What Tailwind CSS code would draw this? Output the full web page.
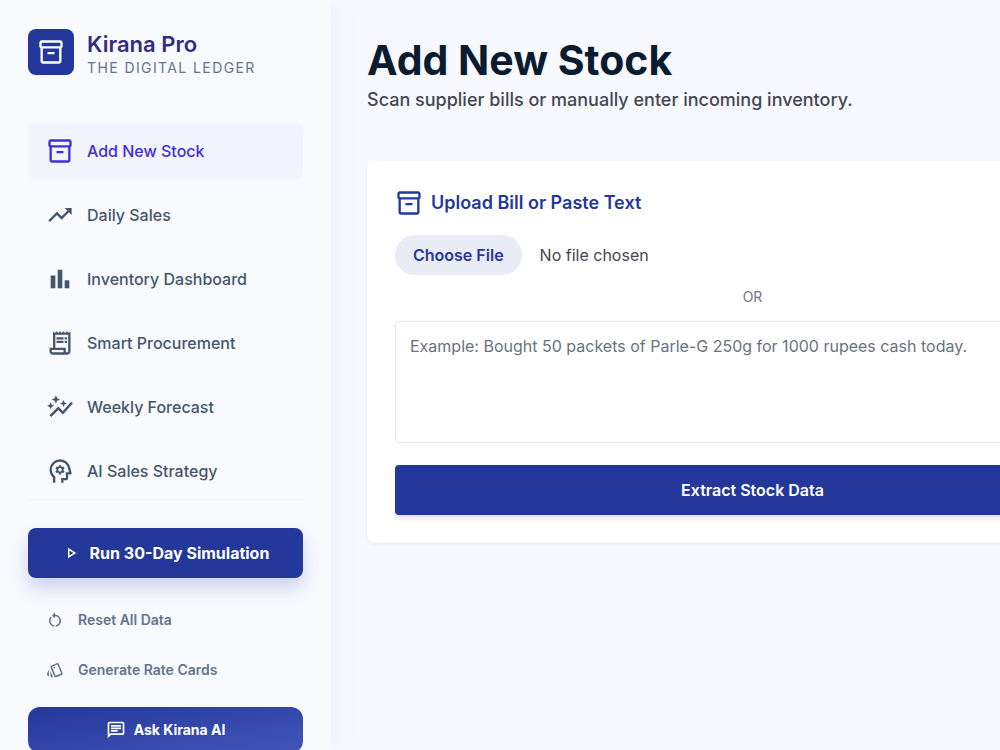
<!DOCTYPE html>
<html lang="en">
  <head>
    <meta charset="UTF-8" />
    <meta name="viewport" content="width=device-width, initial-scale=1.0" />
    <title>Kirana Pro - Add New Stock</title>
    <script src="https://cdn.jsdelivr.net/npm/@tailwindcss/browser@4"></script>
  </head>
  <body class="flex h-screen overflow-hidden bg-[#f8f9ff] font-['Inter','Liberation_Sans',sans-serif] text-[#0b1c30]">
    <!-- shared icons -->
    <svg class="hidden">
      <symbol id="box" viewBox="0 0 24 24">
        <path d="M20 2H4c-1 0-2 .9-2 2v3.01c0 .72.43 1.34 1 1.69V20c0 1.1 1.1 2 2 2h14c.9 0 2-.9 2-2V8.7c.57-.35 1-.97 1-1.69V4c0-1.1-1-2-2-2zm-1 18H5V9h14v11zm1-13H4V4h16v3zM9 12h6v2H9z" />
      </symbol>
    </svg>

    <!-- Sidebar -->
    <aside class="flex w-[331px] shrink-0 flex-col bg-[#f8fafe] px-7 pt-7 shadow-[10px_0_20px_rgba(79,70,229,0.04)]">
      <div class="flex h-12 items-center gap-[13px]">
        <div class="flex size-[46px] items-center justify-center rounded-lg bg-[#24389c] text-white">
          <svg class="size-7" fill="currentColor"><use href="#box" /></svg>
        </div>
        <div class="pt-[3px]">
          <h1 class="text-[22px] leading-7 font-semibold text-indigo-900">Kirana Pro</h1>
          <p class="text-sm leading-5 tracking-widest text-slate-500">THE DIGITAL LEDGER</p>
        </div>
      </div>

      <nav class="mt-[47px] flex flex-col gap-2 text-base font-medium text-slate-600">
        <a href="#" class="flex h-14 items-center gap-[13px] rounded-md bg-[#f2f5ff] px-[18px] text-indigo-700">
          <svg class="size-7" fill="currentColor"><use href="#box" /></svg>
          Add New Stock
        </a>
        <a href="#" class="flex h-14 items-center gap-[13px] rounded-md px-[18px]">
          <svg class="size-7" viewBox="0 0 24 24" fill="currentColor"><path d="m16 6 2.29 2.29-4.88 4.88-4-4L2 16.59 3.41 18l6-6 4 4 6.3-6.29L22 12V6z" /></svg>
          Daily Sales
        </a>
        <a href="#" class="flex h-14 items-center gap-[13px] rounded-md px-[18px]">
          <svg class="size-7" viewBox="0 0 24 24" fill="currentColor"><path d="M4 9h4v11H4zm12 4h4v7h-4zm-6-9h4v16h-4z" /></svg>
          Inventory Dashboard
        </a>
        <a href="#" class="flex h-14 items-center gap-[13px] rounded-md px-[18px]">
          <svg class="size-7" viewBox="0 0 24 24" fill="currentColor"><path d="M19.5 3.5 18 2l-1.5 1.5L15 2l-1.5 1.5L12 2l-1.5 1.5L9 2 7.5 3.5 6 2v14H3v3c0 1.66 1.34 3 3 3h12c1.66 0 3-1.34 3-3V2l-1.5 1.5zM15 20H6c-.55 0-1-.45-1-1v-1h10v2zm4-1c0 .55-.45 1-1 1s-1-.45-1-1v-3H8V5h11v14zM9 7h6v2H9zm7 0h2v2h-2zm-7 3h6v2H9zm7 0h2v2h-2z" /></svg>
          Smart Procurement
        </a>
        <a href="#" class="flex h-14 items-center gap-[13px] rounded-md px-[18px]">
          <svg class="size-7" viewBox="0 0 24 24" fill="currentColor"><path d="M14.06 9.94 12 9l2.06-.94L15 6l.94 2.06L18 9l-2.06.94L15 12l-.94-2.06zM4 14l.94-2.06L7 11l-2.06-.94L4 8l-.94 2.06L1 11l2.06.94L4 14zm4.5-5 1.09-2.41L12 5.5 9.59 4.41 8.5 2 7.41 4.41 5 5.5l2.41 1.09L8.5 9zm-4 11.5 6-6.01 4 4L23 8.93l-1.41-1.41-7.09 7.97-4-4L3 19l1.5 1.5z" /></svg>
          Weekly Forecast
        </a>
        <a href="#" class="flex h-14 items-center gap-[13px] rounded-md px-[18px]">
          <svg class="size-7" viewBox="0 -960 960 960" fill="currentColor"><path fill-rule="evenodd" d="M240-80v-172q-57-52-88.5-121.5T120-520q0-150 105-255t255-105q125 0 221.5 73.5T827-615l52 205q5 19-7 34.5T840-360h-80v120q0 33-23.5 56.5T680-160h-80v80h-80v-160h160v-200h108l-38-155q-23-91-98-148t-172-57q-116 0-198 81t-82 197q0 60 24.5 114t69.5 96l26 24v208h-80ZM440-360h80l6-50q8-3 14.5-7t11.5-9l46 20 40-68-40-30q2-8 2-16t-2-16l40-30-40-68-46 20q-5-5-11.5-9t-14.5-7l-6-50h-80l-6 50q-8 3-14.5 7t-11.5 9l-46-20-40 68 40 30q-2 8-2 16t2 16l-40 30 40 68 46-20q5 5 11.5 9t14.5 7l6 50Zm40-100q-25 0-42.5-17.5T420-520t17.5-42.5T480-580t42.5 17.5T540-520t-17.5 42.5T480-460Z" /></svg>
          AI Sales Strategy
        </a>
      </nav>

      <div class="flex flex-col border-t border-slate-100 pt-7">
        <button type="button" class="flex h-[50px] shrink-0 items-center justify-center gap-2.5 rounded-lg bg-[#24389c] text-base font-bold text-white shadow-[0_10px_18px_rgba(36,56,156,0.2)]">
          <svg class="size-[18px]" viewBox="0 -960 960 960" fill="currentColor"><path d="M320-200v-560l440 280L320-200Zm80-146 210-134-210-134v268Z" /></svg>
          Run 30-Day Simulation
        </button>
        <div class="mt-[17px] flex flex-col text-sm font-semibold text-slate-500">
          <button type="button" class="flex h-[50px] items-center gap-3.5 px-[18px]">
            <svg class="size-[18px]" viewBox="0 0 24 24" fill="currentColor"><path d="M12 5V2L8 6l4 4V7c3.31 0 6 2.69 6 6 0 2.97-2.17 5.43-5 5.91v2.02c3.95-.49 7-3.85 7-7.93 0-4.42-3.58-8-8-8zm-6 8c0-1.65.67-3.15 1.76-4.24L6.34 7.34C4.9 8.79 4 10.79 4 13c0 4.08 3.05 7.44 7 7.93v-2.02c-2.83-.48-5-2.94-5-5.91z" /></svg>
            Reset All Data
          </button>
          <button type="button" class="flex h-[50px] items-center gap-3.5 px-[18px]">
            <svg class="size-[18px]" viewBox="0 0 24 24" fill="currentColor"><path d="m2.53 19.65 1.34.56v-9.03l-2.43 5.86c-.41 1.02.08 2.19 1.09 2.61zm19.5-3.7L17.07 3.98c-.31-.75-1.04-1.21-1.81-1.23-.26 0-.53.04-.79.15L7.1 5.95c-.75.31-1.21 1.03-1.23 1.8-.01.27.04.54.15.8l4.96 11.97c.31.76 1.05 1.22 1.83 1.23.26 0 .52-.05.77-.15l7.36-3.05c1.02-.42 1.51-1.59 1.09-2.6zm-9.2 3.8L7.87 7.79l7.35-3.04h.01l4.95 11.95-7.35 3.05zM5.88 19.75c0 1.1.9 2 2 2h1.45l-3.45-8.34v6.34z" /><circle cx="11" cy="9" r="1" /></svg>
            Generate Rate Cards
          </button>
        </div>
        <button type="button" class="mt-3 flex h-[46px] shrink-0 items-center justify-center gap-2 rounded-xl bg-linear-to-br from-[#24389c] to-[#4355b9] text-sm font-bold text-white">
          <svg class="size-5" viewBox="0 0 24 24" fill="currentColor"><path d="M4 4h16v12H5.17L4 17.17V4m0-2c-1.1 0-1.99.9-1.99 2L2 22l4-4h14c1.1 0 2-.9 2-2V4c0-1.1-.9-2-2-2H4zm2 10h8v2H6v-2zm0-3h12v2H6V9zm0-3h12v2H6V6z" /></svg>
          Ask Kirana AI
        </button>
      </div>
    </aside>

    <!-- Main content -->
    <main class="flex-1 overflow-hidden px-9 pt-9">
      <div class="min-w-[771px]">
        <h2 class="text-[41px] leading-12 font-bold">Add New Stock</h2>
        <p class="mt-0.5 text-lg leading-7 font-medium text-[#454652]">Scan supplier bills or manually enter incoming inventory.</p>

        <section class="mt-[47px] flex flex-col rounded-lg bg-white p-7 shadow-[0_1px_3px_rgba(0,0,0,0.07)]">
          <label for="billFile" class="flex items-center gap-2 text-lg leading-7 font-semibold text-[#24389c]">
            <svg class="size-7" fill="currentColor"><use href="#box" /></svg>
            Upload Bill or Paste Text
          </label>
          <input
            type="file"
            id="billFile"
            class="mt-[18px] text-base leading-6 text-[#454652] file:mr-[18px] file:h-10 file:rounded-full file:bg-[#e9ebf5] file:px-[18px] file:text-base file:font-semibold file:text-[#24389c]"
          />
          <label for="billText" class="mt-3 text-center text-sm leading-5 text-[#757684]">OR</label>
          <textarea
            id="billText"
            placeholder="Example: Bought 50 packets of Parle-G 250g for 1000 rupees cash today."
            class="mt-3.5 h-[122px] resize-none rounded border border-[#e8e9ee] px-3.5 py-3 text-base leading-6 placeholder:text-gray-500"
          ></textarea>
          <button type="button" class="mt-[22px] h-[50px] rounded bg-[#24389c] text-base font-semibold text-white shadow-md">
            Extract Stock Data
          </button>
        </section>
      </div>
    </main>
  </body>
</html>
